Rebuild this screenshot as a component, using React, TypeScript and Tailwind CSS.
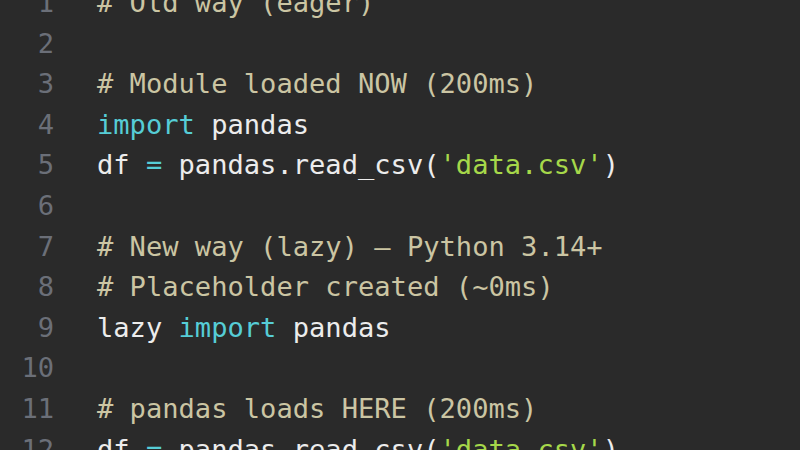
import React from "react";

type Token = { text: string; kind?: "comment" | "keyword" | "string" | "op" };

const lines: Token[][] = [
  [{ text: "# Old way (eager)", kind: "comment" }],
  [],
  [{ text: "# Module loaded NOW (200ms)", kind: "comment" }],
  [{ text: "import", kind: "keyword" }, { text: " pandas" }],
  [
    { text: "df " },
    { text: "=", kind: "op" },
    { text: " pandas.read_csv(" },
    { text: "'data.csv'", kind: "string" },
    { text: ")" },
  ],
  [],
  [{ text: "# New way (lazy) – Python 3.14+", kind: "comment" }],
  [{ text: "# Placeholder created (~0ms)", kind: "comment" }],
  [{ text: "lazy " }, { text: "import", kind: "keyword" }, { text: " pandas" }],
  [],
  [{ text: "# pandas loads HERE (200ms)", kind: "comment" }],
  [
    { text: "df " },
    { text: "=", kind: "op" },
    { text: " pandas.read_csv(" },
    { text: "'data.csv'", kind: "string" },
    { text: ")" },
  ],
];

const colorFor = (kind?: Token["kind"]) => {
  if (kind === "comment") return "text-[#cbc5a3]";
  if (kind === "keyword") return "text-[#56cdd6]";
  if (kind === "op") return "text-[#56cdd6]";
  if (kind === "string") return "text-[#a6d84a]";
  return "text-[#ececec]";
};

const App: React.FC = () => {
  return (
    <div className="w-[800px] h-[450px] overflow-hidden bg-[#2a2a2a] font-['DejaVu_Sans_Mono',monospace] text-[27.1px]">
      {/* scrolled editor view */}
      <div className="flex flex-col mt-[-17px]">
        {lines.map((tokens, i) => (
          <div key={i} className="flex flex-row h-[40.6px] leading-[40.6px] whitespace-pre">
            <span className="w-[54px] text-right text-[#6b6f78]">{i + 1}</span>
            <span className="ml-[43px]">
              {tokens.map((t, j) => (
                <span key={j} className={colorFor(t.kind)}>
                  {t.text}
                </span>
              ))}
            </span>
          </div>
        ))}
      </div>
    </div>
  );
};

export default App;
